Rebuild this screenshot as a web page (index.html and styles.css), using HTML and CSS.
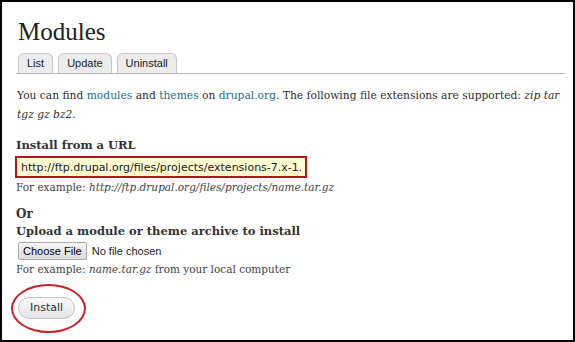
FILE: index.html
```html
<!DOCTYPE html>
<html lang="en">

<head>
    <meta charset="UTF-8">
    <title>Modules</title>
    <link rel="stylesheet" href="styles.css">
</head>

<body>
    <div class="frame">
        <h1>Modules</h1>
        <ul class="tabs">
            <li><a href="#">List</a></li>
            <li><a href="#">Update</a></li>
            <li><a href="#">Uninstall</a></li>
        </ul>

        <p class="intro">You can find <a href="#">modules</a> and <a href="#">themes</a> on <a href="#">drupal.org</a>. The following file extensions are supported: <em>zip tar tgz gz bz2</em>.</p>

        <div class="form-item">
            <label for="url">Install from a URL</label>
            <input type="text" id="url" value="http://ftp.drupal.org/files/projects/extensions-7.x-1.x-dev.tar.gz">
            <div class="description">For example: <em>http://ftp.drupal.org/files/projects/name.tar.gz</em></div>
        </div>

        <div class="or">Or</div>

        <div class="form-item upload">
            <label>Upload a module or theme archive to install</label>
            <div class="file-row">
                <button type="button" class="file-btn">Choose File</button>
                <span class="file-name">No file chosen</span>
            </div>
            <div class="description">For example: <em>name.tar.gz</em> from your local computer</div>
        </div>

        <div class="actions">
            <button type="submit" class="install">Install</button>
        </div>
    </div>
</body>

</html>
```

FILE: styles.css
```css
html,
body {
    margin: 0;
    padding: 0;
}

body {
    font-family: "DejaVu Serif", Georgia, serif;
    color: #2e2e2e;
    background: #fff;
}

.frame {
    width: 575px;
    height: 342px;
    box-sizing: border-box;
    border: 2px solid #000;
    padding: 0 0 0 14px;
    overflow: hidden;
}

h1 {
    font-family: "Liberation Serif", Georgia, serif;
    font-weight: normal;
    font-size: 25px;
    color: #222;
    margin: 16px 0 0 2px;
    line-height: 28px;
}

.tabs {
    list-style: none;
    margin: 7px 8px 0 0;
    padding: 0 0 0 2px;
    display: flex;
    gap: 5px;
    border-bottom: 1px solid #bbb;
}

.tabs a {
    display: block;
    font-family: "Liberation Sans", Arial, sans-serif;
    font-size: 11px;
    color: #222;
    text-decoration: none;
    padding: 3px 8px 4px;
    background: #ececec;
    border: 1px solid #c8c8c8;
    border-bottom: none;
    border-radius: 6px 6px 0 0;
}

.intro {
    font-size: 10.7px;
    line-height: 19px;
    margin: 12px 4px 0 1px;
}

.intro a {
    color: #1a6f8e;
    text-decoration: none;
}

.form-item {
    margin-top: 14px;
}

label {
    display: block;
    font-weight: bold;
    font-size: 11.5px;
    color: #333;
    margin-bottom: 4px;
}

input[type="text"] {
    display: block;
    width: 292px;
    height: 22px;
    margin-left: -1px;
    box-sizing: border-box;
    border: 2px solid #b5141c;
    background: #fffbd0;
    font-family: "DejaVu Sans", Verdana, sans-serif;
    font-size: 11px;
    padding: 0 4px;
    color: #222;
}

.description {
    font-size: 10.5px;
    color: #444;
    margin-top: 3px;
}

.or {
    font-weight: bold;
    font-size: 12px;
    margin-top: 14px;
    color: #333;
}

.upload {
    margin-top: 3px;
}

.file-row {
    display: flex;
    align-items: center;
    gap: 5px;
    margin-left: 2px;
}

.file-btn {
    font-family: "Liberation Sans", Arial, sans-serif;
    font-size: 11px;
    padding: 2px 4px;
    border: 1px solid #aaa;
    border-radius: 2px;
    background: linear-gradient(#f6f6f6, #ddd);
    color: #000;
}

.file-name {
    font-family: "Liberation Sans", Arial, sans-serif;
    font-size: 11px;
    color: #222;
}

.actions {
    position: relative;
    margin-top: 21px;
    margin-left: 2px;
    width: 58px;
}

.install {
    font-family: "DejaVu Sans", Verdana, sans-serif;
    font-size: 11px;
    width: 57px;
    height: 22px;
    border: 1px solid #c4c4c4;
    border-radius: 11px;
    background: linear-gradient(#fafafa, #e2e2e2);
    color: #333;
}

.actions::after {
    content: "";
    position: absolute;
    left: -7px;
    top: -12px;
    width: 71px;
    height: 45px;
    border: 2px solid #c5262b;
    border-radius: 50%;
}
```
